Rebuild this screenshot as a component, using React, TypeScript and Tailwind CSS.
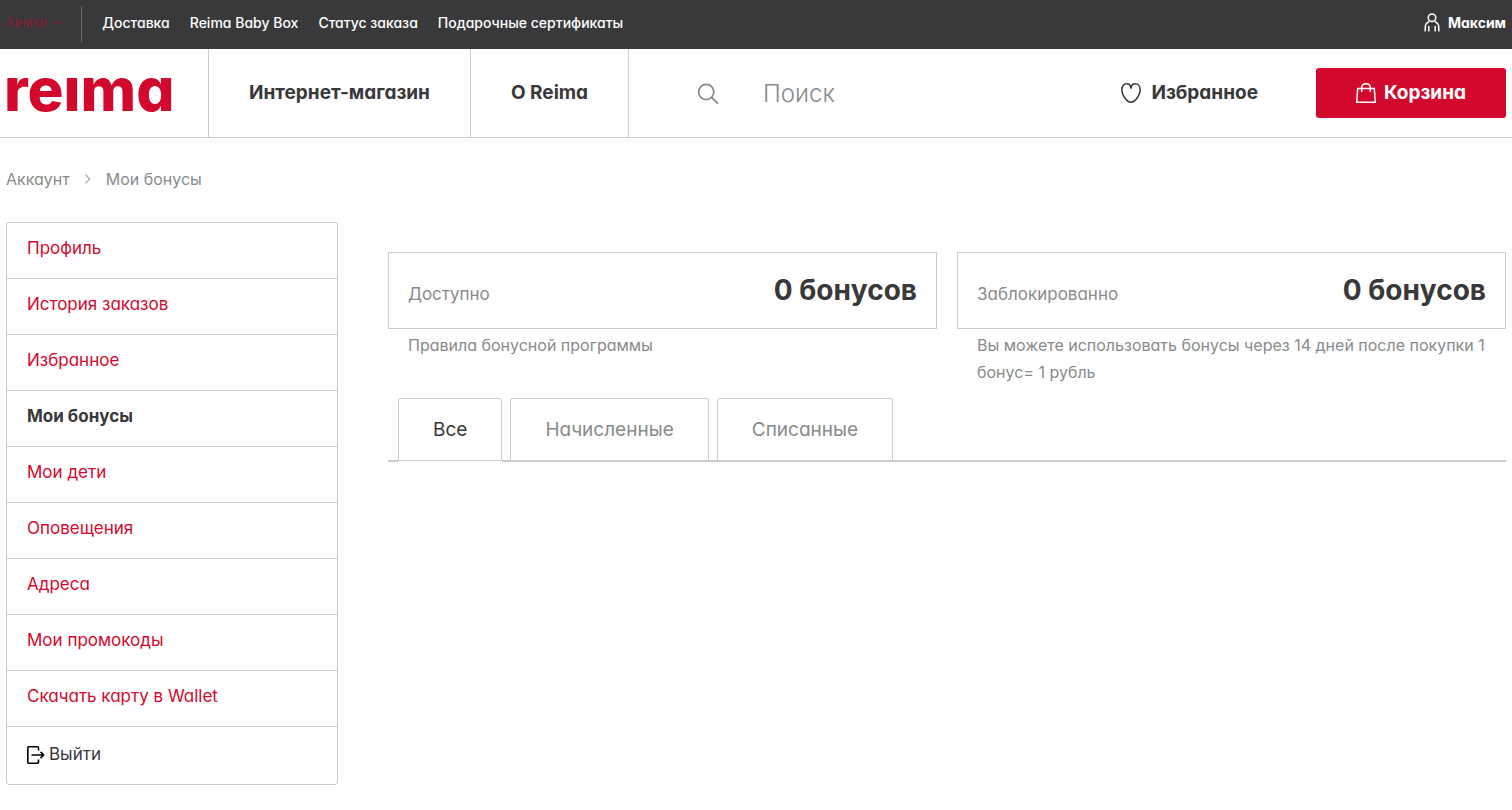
import { useState } from "react";
import { clsx } from "clsx";

const topLinks = ["Доставка", "Reima Baby Box", "Статус заказа", "Подарочные сертификаты"];

const accountLinks = [
  "Профиль",
  "История заказов",
  "Избранное",
  "Мои бонусы",
  "Мои дети",
  "Оповещения",
  "Адреса",
  "Мои промокоды",
  "Скачать карту в Wallet",
];

const tabs = ["Все", "Начисленные", "Списанные"];

function ChevronIcon({ className }: { className?: string }) {
  return (
    <svg
      aria-hidden="true"
      viewBox="0 0 10 10"
      fill="none"
      stroke="currentColor"
      strokeWidth="1.2"
      className={className}
    >
      <path d="M1.5 3 5 6.5 8.5 3" />
    </svg>
  );
}

function UserIcon() {
  return (
    <svg
      aria-hidden="true"
      viewBox="0 0 16 19"
      fill="none"
      stroke="currentColor"
      strokeWidth="1.5"
      className="h-[19px] w-4"
    >
      <circle cx="8" cy="4.7" r="3.8" />
      <path d="M1.2 18.5v-3.9c0-3 1.6-5 4-6M14.8 18.5v-3.9c0-3-1.6-5-4-6M4.8 18.5v-5.4M11.2 18.5v-5.4" />
    </svg>
  );
}

function SearchIcon() {
  return (
    <svg
      aria-hidden="true"
      viewBox="0 0 22 22"
      fill="none"
      stroke="currentColor"
      strokeWidth="1.7"
      className="size-[22px] shrink-0"
    >
      <circle cx="9.2" cy="9" r="7.6" />
      <path d="m14.6 14.4 6.4 6.4" />
    </svg>
  );
}

function HeartIcon() {
  return (
    <svg
      aria-hidden="true"
      viewBox="0 0 20 20"
      fill="none"
      stroke="currentColor"
      strokeWidth="1.6"
      strokeLinejoin="round"
      className="size-5"
    >
      <path d="M10 5.2C9.600 2.500 8 .8 5.800.8 2.900.8.8 3.200.8 6.700c0 5.500 5.200 12.500 9.200 12.500s9.200-7 9.200-12.500c0-3.500-2.100-5.900-5-5.900C12 .8 10.400 2.500 10 5.200Z" />
    </svg>
  );
}

function BagIcon() {
  return (
    <svg
      aria-hidden="true"
      viewBox="0 0 20 20"
      fill="none"
      stroke="currentColor"
      strokeWidth="1.5"
      className="size-5"
    >
      <path d="M1.700 5.600h16.600l1 13.600H.7Z" />
      <path d="M5.700 9V4.700c0-2.400 1.800-4 4.300-4s4.300 1.600 4.300 4V9" />
    </svg>
  );
}

function ExitIcon() {
  return (
    <svg
      aria-hidden="true"
      viewBox="0 0 18 18"
      fill="none"
      stroke="currentColor"
      strokeWidth="1.6"
      className="size-[18px]"
    >
      <path d="M11.500 4.500V1.700a.9.900 0 0 0-.9-.9H1.700a.9.900 0 0 0-.9.900v14.600c0 .5.400.9.900.9h8.900c.5 0 .9-.4.900-.9v-2.800" />
      <path d="M4.500 9h12M13.500 5.900 16.600 9l-3.100 3.100" />
    </svg>
  );
}

function TopBar() {
  return (
    <div className="flex h-[49px] items-center justify-between bg-[#39383a] px-1.5 text-sm font-medium text-white">
      <div className="flex items-center">
        <button type="button" className="flex items-center gap-1.5 pb-1 text-[13px] font-normal text-[#851c33]">
          Химки
          <ChevronIcon className="size-2.5" />
        </button>
        <nav className="ml-[18px] flex h-[35px] items-center gap-5 border-l border-[#6b6b6c] pb-1 pl-5">
          {topLinks.map(link => (
            <a key={link} href="#">
              {link}
            </a>
          ))}
        </nav>
      </div>
      <a href="#" className="flex items-center gap-2 pb-1 font-bold">
        <UserIcon />
        Максим
      </a>
    </div>
  );
}

function Header() {
  return (
    <header className="flex h-[89px] items-stretch border-b border-[#cccccc] pr-1.5 text-[19px] font-bold">
      <a
        href="#"
        aria-label="Reima"
        className="flex w-[208px] shrink-0 items-center pb-2 pl-1 text-[60px] leading-none font-extrabold text-[#d2092c]"
      >
        reıma
      </a>
      <nav className="flex items-stretch">
        <a href="#" className="flex items-center border-l border-[#cccccc] px-10">
          Интернет-магазин
        </a>
        <a href="#" className="flex items-center border-x border-[#cccccc] px-10">
          О Reima
        </a>
      </nav>
      <label className="flex min-w-0 flex-1 items-center gap-11 pt-0.5 pl-[68px] text-[#878b8b]">
        <SearchIcon />
        <input
          type="search"
          aria-label="Поиск"
          placeholder="Поиск"
          className="min-w-0 flex-1 text-2xl font-light outline-none placeholder:text-[#878b8b]"
        />
      </label>
      <a href="#" className="flex items-center gap-2.5">
        <HeartIcon />
        Избранное
      </a>
      <button
        type="button"
        className="my-auto ml-[58px] flex h-[50px] items-center gap-2 rounded-[3px] bg-[#d2092c] px-10 text-white"
      >
        <BagIcon />
        Корзина
      </button>
    </header>
  );
}

function Sidebar() {
  return (
    <aside className="w-[332px] shrink-0">
      <ul className="divide-y divide-[#cccccc] rounded-[3px] border border-[#cccccc] text-[17px]">
        {accountLinks.map(link => (
          <li key={link}>
            <a
              href="#"
              className={clsx(
                "block px-5 pt-3 pb-4 leading-[27px]",
                link === "Мои бонусы" ? "font-bold text-[#39383a]" : "text-[#d2092c]"
              )}
            >
              {link}
            </a>
          </li>
        ))}
        <li>
          <a href="#" className="flex items-center gap-1 px-5 pt-3.5 pb-4 leading-[27px]">
            <span className="text-black">
              <ExitIcon />
            </span>
            Выйти
          </a>
        </li>
      </ul>
    </aside>
  );
}

interface BonusCardProps {
  label: string;
  children: React.ReactNode;
}

function BonusCard({ label, children }: BonusCardProps) {
  return (
    <div className="leading-[27px] text-[#878b8b]">
      <div className="flex h-[77px] items-baseline justify-between border border-[#cccccc] px-[19px] pt-[17px]">
        <span className="text-[17px]">{label}</span>
        <strong className="text-[28px] leading-10 font-bold text-[#39383a]">0 бонусов</strong>
      </div>
      <div className="pt-[3px] pl-5">{children}</div>
    </div>
  );
}

export default function App() {
  const [activeTab, setActiveTab] = useState("Все");

  return (
    <div className="min-h-screen bg-white font-['Inter',sans-serif] text-base text-[#39383a] [font-feature-settings:'cv11']">
      <TopBar />
      <Header />
      <nav className="flex items-center gap-3 px-1.5 pt-[27px] pb-px leading-7 text-[#878b8b]">
        <a href="#">Аккаунт</a>
        <ChevronIcon className="size-3 -rotate-90 text-[#b5b5b5]" />
        <span>Мои бонусы</span>
      </nav>
      <div className="flex gap-[50px] px-1.5 pt-7">
        <Sidebar />
        <main className="min-w-0 flex-1 pt-[30px]">
          <div className="grid grid-cols-2 gap-5">
            <BonusCard label="Доступно">
              <a href="#">Правила бонусной программы</a>
            </BonusCard>
            <BonusCard label="Заблокированно">
              Вы можете использовать бонусы через 14 дней после покупки 1 бонус= 1 рубль
            </BonusCard>
          </div>
          <div role="tablist" className="mt-3 flex gap-2 border-b-2 border-[#cccccc] px-2.5">
            {tabs.map(tab => (
              <button
                key={tab}
                type="button"
                role="tab"
                aria-selected={tab === activeTab}
                onClick={() => setActiveTab(tab)}
                className={clsx(
                  "rounded-t-[3px] border border-[#cccccc] px-[34px] text-[19px] leading-[61px]",
                  tab === activeTab
                    ? "-mb-px bg-white text-[#39383a] shadow-[0_1px_0_white]"
                    : "border-b-0 text-[#878b8b]"
                )}
              >
                {tab}
              </button>
            ))}
          </div>
        </main>
      </div>
    </div>
  );
}
